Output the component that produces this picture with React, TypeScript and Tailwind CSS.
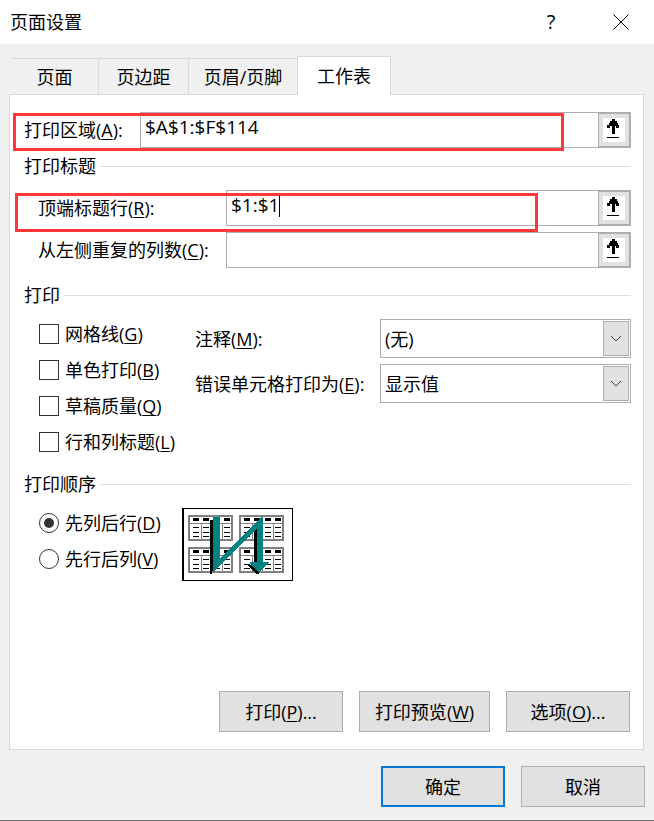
import { useState } from "react";
import type { ReactNode } from "react";

const tabs = ["页面", "页边距", "页眉/页脚", "工作表"];
const tabWidths = ["w-[88px]", "w-[90px]", "w-[108px]", "w-[94px]"];

const checkOptions = [
  { id: "gridlines", text: "网格线", hotkey: "G" },
  { id: "mono", text: "单色打印", hotkey: "B" },
  { id: "draft", text: "草稿质量", hotkey: "Q" },
  { id: "headings", text: "行和列标题", hotkey: "L" },
];

const orderOptions = [
  { id: "down", text: "先列后行", hotkey: "D" },
  { id: "over", text: "先行后列", hotkey: "V" },
];

function Hotkey({ text, hotkey, end = "" }: { text: string; hotkey: string; end?: string }) {
  return (
    <>
      {text}(
      <span className="underline decoration-1 underline-offset-2 [text-decoration-skip-ink:none]">{hotkey}</span>
      ){end}
    </>
  );
}

function GroupTitle({ children }: { children: ReactNode }) {
  return (
    <h2 className="flex h-6 items-center gap-1 leading-6">
      {children}
      <span className="h-px flex-1 bg-[#dcdcdc]" />
    </h2>
  );
}

function RangeField({ id, label, value, children }: { id: string; label: string; value: string; children?: ReactNode }) {
  const [text, setText] = useState(value);
  return (
    <div className="relative flex h-9 flex-1 border border-[#adadb3]">
      <input
        id={id}
        type="text"
        value={text}
        onChange={(e) => setText(e.target.value)}
        className="min-w-0 flex-1 bg-white pb-1.5 pl-1 text-[19px] leading-6 outline-none"
      />
      {children}
      <button
        type="button"
        aria-label={label}
        className="flex w-8 items-center justify-center border border-[#adadad] bg-[#e1e1e1]"
      >
        <svg width="22" height="24" viewBox="0 0 22 24" shapeRendering="crispEdges">
          <rect width="22" height="24" fill="#fff" />
          <path d="M9 1h3v2h2v2h1v2h1v3h-3V8h-1v8H9V8H7v2H4V7h2V5h1V3h2z" />
          <rect x="4" y="19" width="12" height="1" />
        </svg>
      </button>
    </div>
  );
}

function SelectField({ id, options }: { id: string; options: string[] }) {
  return (
    <div className="relative h-[39px] border border-[#adadb3]">
      <select id={id} className="h-full w-full appearance-none bg-white pl-1 outline-none">
        {options.map((option) => (
          <option key={option}>{option}</option>
        ))}
      </select>
      <span className="pointer-events-none absolute inset-y-px right-px flex w-[26px] items-center justify-center border border-[#adadad] bg-[#e1e1e1]">
        <svg width="12" height="8" viewBox="0 0 12 8" fill="none" stroke="#444">
          <path d="M1 1l5 5 5-5" />
        </svg>
      </span>
    </div>
  );
}

function PushButton({ children, className = "" }: { children: ReactNode; className?: string }) {
  return (
    <button type="button" className={`h-[41px] bg-[#e1e1e1] ${className}`}>
      {children}
    </button>
  );
}

// one small sheet of the page order preview
function MiniSheet({ x, y }: { x: number; y: number }) {
  return (
    <g transform={`translate(${x} ${y})`}>
      <path
        fill="#808080"
        fillRule="evenodd"
        d="M0 0h45v26H0zM2 2v6h41V2zM2 9v15h11V9zM14 9v15h9V9zM24 9v15h10V9zM35 9v15h8V9z"
      />
      {[5, 15, 26, 36].map((cx) => (
        <path key={cx} d={`M${cx} 3h6v3h-6zM${cx} 12h6v1h-6zM${cx} 17h6v1h-6zM${cx} 21h6v1h-6z`} />
      ))}
    </g>
  );
}

function OrderPreview() {
  return (
    <svg width="111" height="73" viewBox="0 0 111 73" shapeRendering="crispEdges">
      <rect width="111" height="73" />
      <rect x="2" y="1" width="108" height="71" fill="#fff" />
      <MiniSheet x={6} y={7} />
      <MiniSheet x={57} y={7} />
      <MiniSheet x={6} y={39} />
      <MiniSheet x={57} y={39} />
      <path d="M28 12h3v51h-1v3h-2zM72 20h4v35h-4zM66 57h3l8 6v3h-3z" />
      <path
        fill="#008080"
        d="M31 9h7v42L79 9h2v45h6v1L77 64h-1l-8-9v-1h7V21L36 59l-4 5h-1z"
      />
    </svg>
  );
}

export default function App() {
  const [order, setOrder] = useState("down");

  return (
    <div className="flex min-h-screen flex-col border-b border-[#6e6e6e] bg-[#f0f0f0] font-['Open_Sans','Noto_Sans_CJK_SC',sans-serif] text-lg leading-6 text-black">
      <header className="flex h-11 items-center bg-white pl-2.5">
        <h1 className="flex-1">页面设置</h1>
        <button type="button" aria-label="帮助" className="w-[74px] text-xl">
          ?
        </button>
        <button type="button" aria-label="关闭" className="flex w-[66px] justify-center">
          <svg width="16" height="16" viewBox="0 0 16 16" stroke="#000">
            <path d="M0.5 0.5l15 15M15.5 0.5l-15 15" />
          </svg>
        </button>
      </header>

      <main className="flex flex-1 flex-col px-[9px] pt-3">
        <div role="tablist" className="flex items-end pl-0.5">
          {tabs.map((tab, i) => (
            <button
              key={tab}
              type="button"
              role="tab"
              aria-selected={i === 3}
              className={`${tabWidths[i]} border-[#d9d9d9] ${
                i === 3
                  ? "relative -mb-px h-[39px] border-x border-t bg-white"
                  : i === 2
                    ? "h-9 border-t"
                    : "h-9 border-t border-r"
              }`}
            >
              {tab}
            </button>
          ))}
        </div>

        <section className="mr-px flex flex-1 flex-col border border-[#d9d9d9] bg-white pt-[17px] pr-3 pb-[17px] pl-3.5">
          <div className="relative flex items-center">
            <label htmlFor="area" className="w-[116px]">
              <Hotkey text="打印区域" hotkey="A" end=":" />
            </label>
            <RangeField id="area" label="选择打印区域" value="$A$1:$F$114" />
            <div className="pointer-events-none absolute top-px right-[67px] -bottom-[3px] -left-[11px] border-3 border-[#fe3838]" />
          </div>

          <div className="mt-1.5">
            <GroupTitle>打印标题</GroupTitle>
          </div>
          <div className="relative mt-3 flex items-center pl-3.5">
            <label htmlFor="rows" className="w-[188px]">
              <Hotkey text="顶端标题行" hotkey="R" end=":" />
            </label>
            <RangeField id="rows" label="选择顶端标题行" value="$1:$1">
              <span className="absolute top-1 left-[52px] h-[22px] w-px bg-black" />
            </RangeField>
            <div className="pointer-events-none absolute top-[3px] right-[93px] -bottom-1.5 -left-[9px] border-3 border-[#fe3838]" />
          </div>
          <div className="mt-1.5 flex items-center pl-3.5">
            <label htmlFor="cols" className="w-[188px]">
              <Hotkey text="从左侧重复的列数" hotkey="C" end=":" />
            </label>
            <RangeField id="cols" label="选择左侧重复的列" value="" />
          </div>

          <div className="mt-[15px]">
            <GroupTitle>打印</GroupTitle>
          </div>
          <div className="mt-[9px] flex pl-[15px]">
            <div className="w-[156px]">
              {checkOptions.map((option) => (
                <label key={option.id} className="flex h-9 items-center gap-1.5">
                  <input
                    type="checkbox"
                    name={option.id}
                    className="size-5 appearance-none border border-[#333] bg-white checked:bg-[#333]"
                  />
                  <span>
                    <Hotkey text={option.text} hotkey={option.hotkey} />
                  </span>
                </label>
              ))}
            </div>
            <div className="grid flex-1 grid-cols-[185px_1fr] content-start items-center gap-y-1.5 pt-[3px]">
              <label htmlFor="comments">
                <Hotkey text="注释" hotkey="M" end=":" />
              </label>
              <SelectField id="comments" options={["(无)", "工作表末尾", "如同工作表中的显示"]} />
              <label htmlFor="errors">
                <Hotkey text="错误单元格打印为" hotkey="E" end=":" />
              </label>
              <SelectField id="errors" options={["显示值", "<空白>", "--", "#N/A"]} />
            </div>
          </div>

          <div className="mt-3">
            <GroupTitle>打印顺序</GroupTitle>
          </div>
          <div className="mt-[9px] flex pl-[15px]">
            <div className="w-[143px]">
              {orderOptions.map((option) => (
                <label key={option.id} className="flex h-9 items-center gap-1.5">
                  <input
                    type="radio"
                    name="order"
                    checked={order === option.id}
                    onChange={() => setOrder(option.id)}
                    className="grid size-5 appearance-none place-items-center rounded-full border border-[#333] bg-white checked:before:size-2.5 checked:before:rounded-full checked:before:bg-[#333] checked:before:content-['']"
                  />
                  <span>
                    <Hotkey text={option.text} hotkey={option.hotkey} />
                  </span>
                </label>
              ))}
            </div>
            <div className="pt-[3px]">
              <OrderPreview />
            </div>
          </div>

          <div className="mt-auto flex justify-end gap-4 pr-px">
            <PushButton className="w-[124px] border border-[#adadad]">
              <Hotkey text="打印" hotkey="P" end="..." />
            </PushButton>
            <PushButton className="w-[131px] border border-[#adadad]">
              <Hotkey text="打印预览" hotkey="W" />
            </PushButton>
            <PushButton className="w-[124px] border border-[#adadad]">
              <Hotkey text="选项" hotkey="O" end="..." />
            </PushButton>
          </div>
        </section>

        <footer className="flex justify-end gap-4 pt-4 pb-[13px]">
          <PushButton className="w-[124px] border-2 border-[#0078d7]">确定</PushButton>
          <PushButton className="w-[124px] border border-[#adadad]">取消</PushButton>
        </footer>
      </main>
    </div>
  );
}
